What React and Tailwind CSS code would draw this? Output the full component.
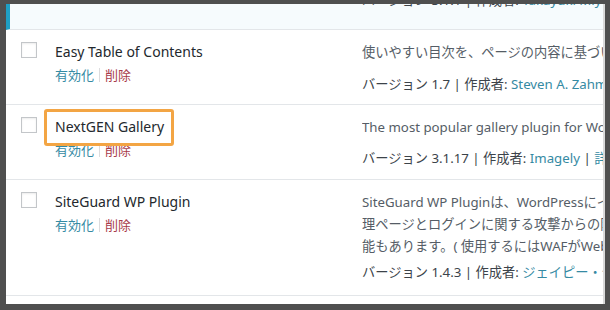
const font = { fontFamily: '"Noto Sans", "Noto Sans CJK JP", sans-serif' }

const plugins = [
  {
    name: 'Easy Table of Contents',
    desc: ['使いやすい目次を、ページの内容に基づいて自動的に挿入します。'],
    version: '1.7',
    author: 'Steven A. Zahm',
    h: 'h-[75px]',
    vm: 'mt-[10px]',
  },
  {
    name: 'NextGEN Gallery',
    desc: ['The most popular gallery plugin for WordPress and one of the most popular plugins of all time.'],
    version: '3.1.17',
    author: 'Imagely',
    extra: true,
    h: 'h-[75px]',
    vm: 'mt-[9px]',
    highlight: true,
  },
  {
    name: 'SiteGuard WP Plugin',
    desc: [
      'SiteGuard WP Pluginは、WordPressにインストールするだけで、セキュリティを向上させることができます。管',
      '理ページとログインに関する攻撃からの防御に特化したセキュリティプラグインです。WAF (SiteGuard Lite)の除外リスト作成機',
      '能もあります。( 使用するにはWAFがWebサーバーにインストールされている必要があります)',
    ],
    version: '1.4.3',
    author: 'ジェイピー・セキュア',
    h: 'h-[116px]',
    vm: 'mt-[4px]',
  },
]

function Checkbox() {
  return <div className="h-4 w-4 border border-[#c3c6c9] bg-white shadow-[inset_0_1px_2px_rgba(0,0,0,0.08)]" />
}

function Row({ p }) {
  return (
    <div className={`relative flex shrink-0 border-b border-[#e3e6e9] bg-white ${p.h}`}>
      <div className="w-[49px] shrink-0 pl-[15px] pt-[12px]">
        <Checkbox />
      </div>
      <div className="w-[307px] shrink-0 pt-[11px]">
        <div className="text-[14px] leading-[22px] text-[#23282d]">{p.name}</div>
        <div className="mt-[1px] flex items-center text-[13px] leading-[22px]">
          <span className="text-[#358aa3]">有効化</span>
          <span className="mx-[5px] h-[14px] w-px bg-[#dcdcde]" />
          <span className="text-[#a83a4a]">削除</span>
        </div>
      </div>
      <div className="min-w-0 flex-1 overflow-hidden whitespace-nowrap pt-[11px] text-[13.25px] leading-[22px]">
        {p.desc.map((d) => (
          <div key={d} className="text-[#555d66]">{d}</div>
        ))}
        <div className={`${p.vm} text-[#3c434a]`}>
          バージョン {p.version} | 作成者: <span className="text-[#358aa3]">{p.author}</span>
          {p.extra && (
            <>
              {' '}| <span className="text-[#358aa3]">詳細を表示</span>
            </>
          )}
        </div>
      </div>
      {p.highlight && (
        <div className="absolute left-[38px] top-[4px] h-[37px] w-[130px] rounded-[3px] border-[3px] border-[#f3a544]" />
      )}
    </div>
  )
}

export default function App() {
  return (
    <div className="h-[310px] w-[610px] bg-[#4f4f4f] pb-[6px] pl-[6px] pr-[5px] pt-[4px]" style={font}>
      <div className="flex h-full flex-col overflow-hidden border-r-2 border-[#d9d9d9] bg-white">
        <div className="flex h-[26px] shrink-0 overflow-hidden border-b border-[#e3e6e9] border-l-4 border-l-[#1f9fc4] bg-[#f6fbfd]">
          <div className="w-[352px] shrink-0" />
          <div className="mt-[-15px] whitespace-nowrap text-[13.25px] leading-[22px] text-[#3c434a]">
            バージョン 3.1.1 | 作成者: <span className="text-[#358aa3]">Takayuki Miyoshi</span>
          </div>
        </div>
        {plugins.map((p) => (
          <Row key={p.name} p={p} />
        ))}
      </div>
    </div>
  )
}
